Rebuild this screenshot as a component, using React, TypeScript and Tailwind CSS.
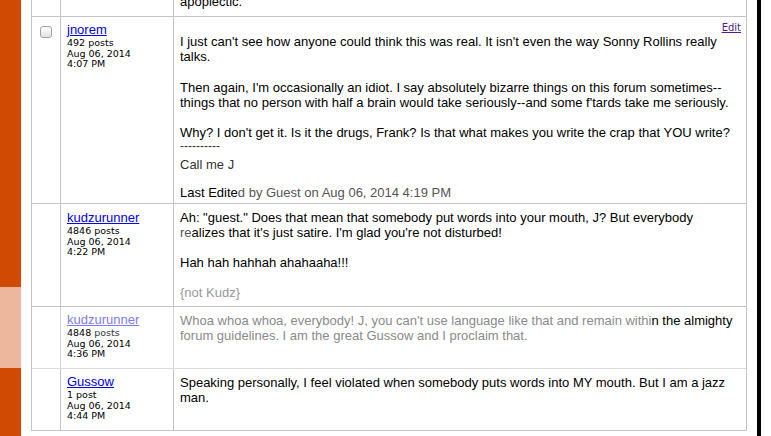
import React from "react";

const sans = { fontFamily: '"Liberation Sans", Arial, sans-serif' } as const;

function Meta({ lines, className = "" }: { lines: React.ReactNode[]; className?: string }) {
  return (
    <div
      className={"mt-[1px] text-[9.5px] leading-[10.7px] text-black " + className}
      style={{ fontFamily: '"DejaVu Sans", Verdana, sans-serif' }}
    >
      {lines.map((l, i) => (
        <div key={i} className="whitespace-nowrap">
          {l}
        </div>
      ))}
    </div>
  );
}

function Line({ children, className = "" }: { children: React.ReactNode; className?: string }) {
  return <div className={"whitespace-nowrap h-[15px] " + className}>{children}</div>;
}

export default function App() {
  return (
    <div className="w-[771px] h-[436px] overflow-hidden bg-white flex items-start" style={sans}>
      {/* orange side bar */}
      <div className="w-[21px] h-[436px] flex flex-col shrink-0">
        <div className="h-[287px] bg-[#d14a03]" />
        <div className="h-[81px] bg-[#ecb79c]" />
        <div className="flex-1 bg-[#d14a03]" />
      </div>

      {/* forum table */}
      <div className="ml-[10px] w-[716px] shrink-0 flex flex-col border-l border-r border-[#c4c4c4] text-[13px] leading-[15px] text-black">
        {/* partial top row */}
        <div className="h-[17px] flex border-b border-[#c4c4c4] overflow-hidden">
          <div className="w-[29px] border-r border-[#c4c4c4]" />
          <div className="w-[113px] border-r border-[#c4c4c4]" />
          <div className="flex-1 pl-[6px]">
            <div className="mt-[-6px] whitespace-nowrap">apoplectic.</div>
          </div>
        </div>

        {/* row 1 */}
        <div className="h-[187px] flex border-b border-[#c4c4c4]">
          <div className="w-[29px] border-r border-[#c4c4c4] flex justify-center pt-[9px]">
            <div className="w-[12px] h-[12px] rounded-[3px] border border-[#a3a3a3] bg-gradient-to-b from-[#ffffff] to-[#e3e3e3]" />
          </div>
          <div className="w-[113px] border-r border-[#c4c4c4] pl-[6px] pt-[5px]">
            <a className="text-[#0000ee] underline">jnorem</a>
            <Meta lines={["492 posts", "Aug 06, 2014", "4:07 PM"]} />
          </div>
          <div className="flex-1 pl-[6px] pr-[5px] pt-[5px]">
            <div
              className="text-right text-[10px] leading-[11px] text-[#551a8b] underline"
              style={{ fontFamily: '"DejaVu Sans", Verdana, sans-serif' }}
            >
              Edit
            </div>
            <div className="mt-[0.5px] mb-[16px]">
              <Line>I just can't see how anyone could think this was real. It isn't even the way Sonny Rollins really</Line>
              <Line>talks.</Line>
            </div>
            <div className="mb-[15px]">
              <Line>Then again, I'm occasionally an idiot. I say absolutely bizarre things on this forum sometimes--</Line>
              <Line>things that no person with half a brain would take seriously--and some f'tards take me seriously.</Line>
            </div>
            <Line>Why? I don't get it. Is it the drugs, Frank? Is that what makes you write the crap that YOU write?</Line>
            <div className="h-[17px] pt-[1px]">
              <div className="text-[12px] leading-[11px] text-[#333]">----------</div>
            </div>
            <Line className="text-[#333]">Call me J</Line>
            <Line className="mt-[13px]">
              Last Edite<span className="text-[#555]">d by Guest on Aug 06, 2014 4:19 PM</span>
            </Line>
          </div>
        </div>

        {/* row 2 */}
        <div className="h-[103px] flex border-b border-[#c4c4c4]">
          <div className="w-[29px] border-r border-[#c4c4c4]" />
          <div className="w-[113px] border-r border-[#c4c4c4] pl-[6px] pt-[6px]">
            <a className="text-[#0000ee] underline">kudzurunner</a>
            <Meta lines={["4846 posts", "Aug 06, 2014", "4:22 PM"]} />
          </div>
          <div className="flex-1 pl-[6px] pt-[6px]">
            <div className="mb-[15px]">
              <Line>Ah: "guest." Does that mean that somebody put words into your mouth, J? But everybody</Line>
              <Line>
                <span className="text-[#555]">re</span>alizes that it's just satire. I'm glad you're not disturbed!
              </Line>
            </div>
            <Line className="mb-[15px]">Hah hah hahhah ahahaaha!!!</Line>
            <Line className="text-[#999]">{"{not Kudz}"}</Line>
          </div>
        </div>

        {/* row 3 (faded) */}
        <div className="h-[62px] flex border-b border-[#dcdcdc]">
          <div className="w-[29px] border-r border-[#d6d6d6]" />
          <div className="w-[113px] border-r border-[#d6d6d6] pl-[6px] pt-[5px]">
            <a className="text-[#7b7bf5] underline">kudzurunner</a>
            <Meta
              className="text-[#8a8a8a]"
              lines={[
                <>
                  4848 <span className="text-[#333]">posts</span>
                </>,
                "Aug 06, 2014",
                "4:36 PM",
              ]}
            />
          </div>
          <div className="flex-1 pl-[6px] pt-[6px] text-[#8a8a8a]">
            <Line>
              Whoa whoa whoa, everybody! J, you can't use language like that and remain withi
              <span className="text-black">n the almighty</span>
            </Line>
            <Line>forum guidelines. I am the great Gussow and I proclaim that.</Line>
          </div>
        </div>

        {/* row 4 */}
        <div className="h-[62px] flex border-b border-[#c4c4c4]">
          <div className="w-[29px] border-r border-[#c4c4c4]" />
          <div className="w-[113px] border-r border-[#c4c4c4] pl-[6px] pt-[5px]">
            <a className="text-[#0000ee] underline">Gussow</a>
            <Meta lines={["1 post", "Aug 06, 2014", "4:44 PM"]} />
          </div>
          <div className="flex-1 pl-[6px] pt-[6px]">
            <Line>Speaking personally, I feel violated when somebody puts words into MY mouth. But I am a jazz</Line>
            <Line>man.</Line>
          </div>
        </div>
      </div>

      {/* right black rule */}
      <div className="ml-[10px] w-[4px] h-[436px] bg-black shrink-0" />
      <div className="flex-1" />
    </div>
  );
}
